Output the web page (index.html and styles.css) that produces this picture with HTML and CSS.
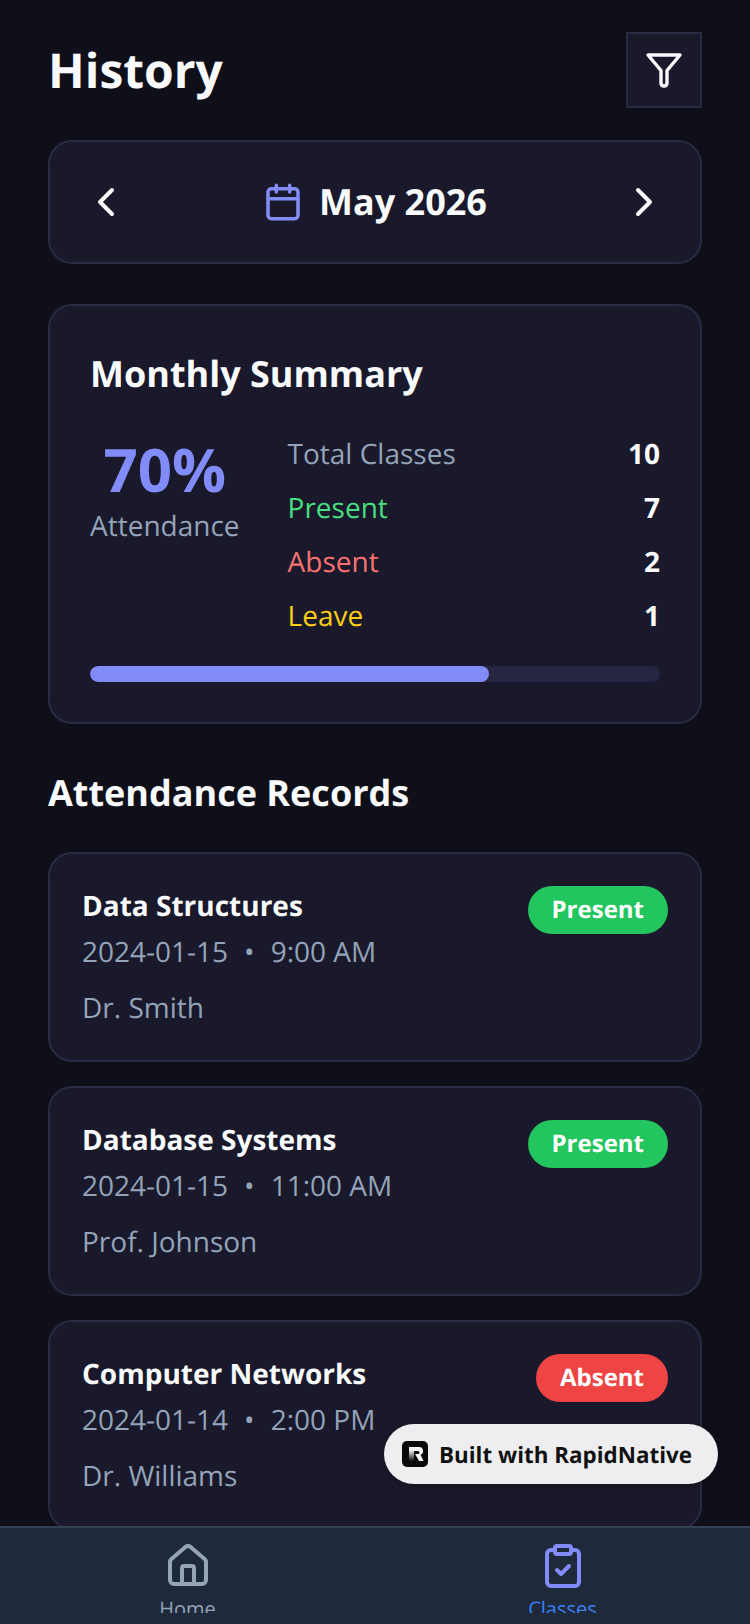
FILE: index.html
```html
<!DOCTYPE html>
<html lang="en">
<head>
<meta charset="utf-8">
<title>History</title>
<link rel="stylesheet" href="styles.css">
</head>
<body>
<div class="app">
  <main class="content">
    <header class="header">
      <h1 class="title">History</h1>
      <button class="filter-btn" aria-label="Filter">
        <svg class="icon-filter" viewBox="0 0 40 40" fill="none" stroke="#f8fafc" stroke-width="3.4" stroke-linecap="round" stroke-linejoin="round"><path d="M4 5H36L23 20.5V33Q23 36 20 36Q17 36 17 33V20.5Z"/></svg>
      </button>
    </header>

    <section class="month card">
      <svg class="chev" viewBox="0 0 24 24" fill="none" stroke="#f8fafc" stroke-width="2" stroke-linecap="round" stroke-linejoin="round"><path d="M15 18l-6-6 6-6"/></svg>
      <div class="month-center">
        <svg class="icon-cal" viewBox="0 0 24 24" fill="none" stroke="#818cf8" stroke-width="2.1" stroke-linecap="round" stroke-linejoin="round"><rect x="3" y="4" width="18" height="18" rx="2"/><path d="M16 2v4M8 2v4M3 10h18"/></svg>
        <span class="month-label">May 2026</span>
      </div>
      <svg class="chev" viewBox="0 0 24 24" fill="none" stroke="#f8fafc" stroke-width="2" stroke-linecap="round" stroke-linejoin="round"><path d="M9 18l6-6-6-6"/></svg>
    </section>

    <section class="summary card">
      <h2 class="summary-title">Monthly Summary</h2>
      <div class="summary-body">
        <div class="rate">
          <div class="rate-value">70%</div>
          <div class="rate-label">Attendance</div>
        </div>
        <div class="stats">
          <div class="stat"><span class="muted">Total Classes</span><b>10</b></div>
          <div class="stat"><span class="green">Present</span><b>7</b></div>
          <div class="stat"><span class="red">Absent</span><b>2</b></div>
          <div class="stat"><span class="yellow">Leave</span><b>1</b></div>
        </div>
      </div>
      <div class="track"><div class="fill" style="width:70%"></div></div>
    </section>

    <h2 class="section-title">Attendance Records</h2>

    <article class="record card">
      <div class="record-info">
        <h3 class="record-name">Data Structures</h3>
        <div class="record-time"><span>2024-01-15</span><span class="dot">•</span><span>9:00 AM</span></div>
        <div class="record-teacher">Dr. Smith</div>
      </div>
      <span class="badge badge-present">Present</span>
    </article>

    <article class="record card">
      <div class="record-info">
        <h3 class="record-name">Database Systems</h3>
        <div class="record-time"><span>2024-01-15</span><span class="dot">•</span><span>11:00 AM</span></div>
        <div class="record-teacher">Prof. Johnson</div>
      </div>
      <span class="badge badge-present">Present</span>
    </article>

    <article class="record card">
      <div class="record-info">
        <h3 class="record-name">Computer Networks</h3>
        <div class="record-time"><span>2024-01-14</span><span class="dot">•</span><span>2:00 PM</span></div>
        <div class="record-teacher">Dr. Williams</div>
      </div>
      <span class="badge badge-absent">Absent</span>
    </article>
  </main>

  <nav class="tabbar">
    <div class="tab tab-home">
      <svg class="tab-icon" viewBox="0 0 24 24" fill="none" stroke="#94a3b8" stroke-width="2" stroke-linecap="round" stroke-linejoin="round"><path d="M3 10a2 2 0 0 1 .7-1.5l7-6a2 2 0 0 1 2.6 0l7 6A2 2 0 0 1 21 10v9a2 2 0 0 1-2 2H5a2 2 0 0 1-2-2z"/><path d="M15 21v-8a1 1 0 0 0-1-1h-4a1 1 0 0 0-1 1v8"/></svg>
      <span class="tab-label">Home</span>
    </div>
    <div class="tab tab-classes">
      <svg class="tab-icon" viewBox="0 0 24 24" fill="none" stroke="#818cf8" stroke-width="2" stroke-linecap="round" stroke-linejoin="round"><rect x="8" y="2" width="8" height="4" rx="1"/><path d="M16 4h2a2 2 0 0 1 2 2v14a2 2 0 0 1-2 2H6a2 2 0 0 1-2-2V6a2 2 0 0 1 2-2h2"/><path d="M9 14l2 2 4-4"/></svg>
      <span class="tab-label">Classes</span>
    </div>
  </nav>

  <div class="built">
    <svg class="built-logo" viewBox="0 0 26 26">
      <defs><linearGradient id="stem" x1="0" y1="0" x2="0" y2="1"><stop offset="0" stop-color="#f5f5f5"/><stop offset="1" stop-color="#111"/></linearGradient></defs>
      <rect width="26" height="26" rx="5" fill="#0a0a0a"/>
      <path d="M7 6h10a4 4 0 0 1 1.6 7.7L21.5 20h-4.4L13 13h3a1.5 1.5 0 0 0 0-3H7z" fill="#f5f5f5"/>
      <rect x="7" y="9" width="5" height="11" fill="url(#stem)"/>
    </svg>
    <span>Built with RapidNative</span>
  </div>
</div>
</body>
</html>
```

FILE: styles.css
```css
* { box-sizing: border-box; margin: 0; padding: 0; }

html, body {
  width: 750px;
  height: 1624px;
  overflow: hidden;
  background: #0f0f1a;
}

body {
  font-family: "Open Sans", "Noto Sans", sans-serif;
  color: #f8fafc;
  text-rendering: geometricPrecision;
}

.app {
  position: relative;
  width: 750px;
  height: 1624px;
  display: flex;
  flex-direction: column;
  overflow: hidden;
}

.content {
  height: 1526px;
  flex: none;
  overflow: hidden;
  padding: 32px 48px 0;
}

.card {
  background: #19192b;
  border: 2px solid #2a2a44;
  border-radius: 24px;
}

.header {
  display: flex;
  align-items: center;
  justify-content: space-between;
  height: 76px;
  margin-bottom: 32px;
}

.title {
  font-size: 48px;
  line-height: 76px;
  padding-top: 2px;
  font-weight: 700;
}

.filter-btn {
  width: 76px;
  height: 76px;
  background: #19192b;
  border: 2px solid #2a2a44;
  display: flex;
  align-items: center;
  justify-content: center;
}

.icon-filter { width: 40px; height: 40px; }

.month {
  height: 124px;
  display: flex;
  align-items: center;
  justify-content: space-between;
  padding: 0 32px;
  margin-bottom: 40px;
}

.chev { width: 48px; height: 48px; }

.month-center {
  display: flex;
  align-items: center;
  gap: 16px;
}

.icon-cal { width: 40px; height: 40px; }

.month-label {
  font-size: 36px;
  line-height: 48px;
  font-weight: 700;
}

.summary {
  height: 420px;
  padding: 40px 40px 0;
  margin-bottom: 45px;
}

.summary-title {
  font-size: 36px;
  line-height: 56px;
  font-weight: 700;
  margin-bottom: 32px;
}

.summary-body {
  display: flex;
  gap: 48px;
}

.rate {
  display: flex;
  flex-direction: column;
  align-items: center;
  flex: none;
}

.rate-value {
  font-size: 60px;
  line-height: 72px;
  font-weight: 700;
  color: #818cf8;
  margin-top: -1px;
}

.rate-label {
  font-size: 28px;
  line-height: 36px;
  margin-top: 3px;
  color: #94a3b8;
}

.stats {
  flex: 1;
  display: flex;
  flex-direction: column;
  gap: 14px;
}

.stat {
  display: flex;
  justify-content: space-between;
  align-items: center;
  height: 40px;
  font-size: 28px;
  line-height: 40px;
}

.stat b { font-weight: 700; color: #f8fafc; }

.muted { color: #94a3b8; }
.green { color: #4ade80; }
.red { color: #f87171; }
.yellow { color: #facc15; }

.track {
  height: 16px;
  margin-top: 30px;
  border-radius: 8px;
  background: #252542;
  overflow: hidden;
}

.fill {
  height: 100%;
  border-radius: 8px;
  background: #818cf8;
}

.section-title {
  font-size: 36px;
  line-height: 48px;
  font-weight: 700;
  margin-bottom: 35px;
}

.record {
  height: 210px;
  display: flex;
  justify-content: space-between;
  align-items: flex-start;
  padding: 32px;
  margin-bottom: 24px;
}

.record-name {
  font-size: 28px;
  line-height: 40px;
  font-weight: 700;
}

.record-time {
  display: flex;
  font-size: 28px;
  line-height: 40px;
  color: #94a3b8;
  margin-top: 6px;
}

.dot { margin: 0 16px; }

.record-teacher {
  font-size: 28px;
  line-height: 40px;
  color: #94a3b8;
  margin-top: 16px;
}

.badge {
  height: 48px;
  padding: 0 24px;
  border-radius: 24px;
  font-size: 24px;
  line-height: 47px;
  font-weight: 700;
  color: #fff;
}

.badge-present { background: #22c55e; }
.badge-absent { background: #ef4444; }

.tabbar {
  height: 98px;
  flex: none;
  display: flex;
  background: #1e293b;
  border-top: 2px solid #334155;
  overflow: hidden;
}

.tab {
  flex: 1;
  display: flex;
  flex-direction: column;
  align-items: center;
  padding-top: 14px;
  height: 85px;
  overflow: hidden;
}

.tab-icon { width: 48px; height: 48px; flex: none; }

.tab-label {
  font-size: 20px;
  line-height: 28px;
  margin-top: 5px;
}

.tab-home .tab-label { color: #94a3b8; }
.tab-classes .tab-label { color: #3b82f6; }

.built {
  position: absolute;
  left: 384px;
  top: 1424px;
  width: 334px;
  height: 60px;
  border-radius: 30px;
  background: #eeeef0;
  box-shadow: 0 2px 8px rgba(0, 0, 0, 0.25);
  display: flex;
  align-items: center;
  gap: 11px;
  padding-left: 18px;
  color: #111;
  font-size: 22.4px;
  font-weight: 700;
}

.built-logo { width: 26px; height: 26px; flex: none; }
```
